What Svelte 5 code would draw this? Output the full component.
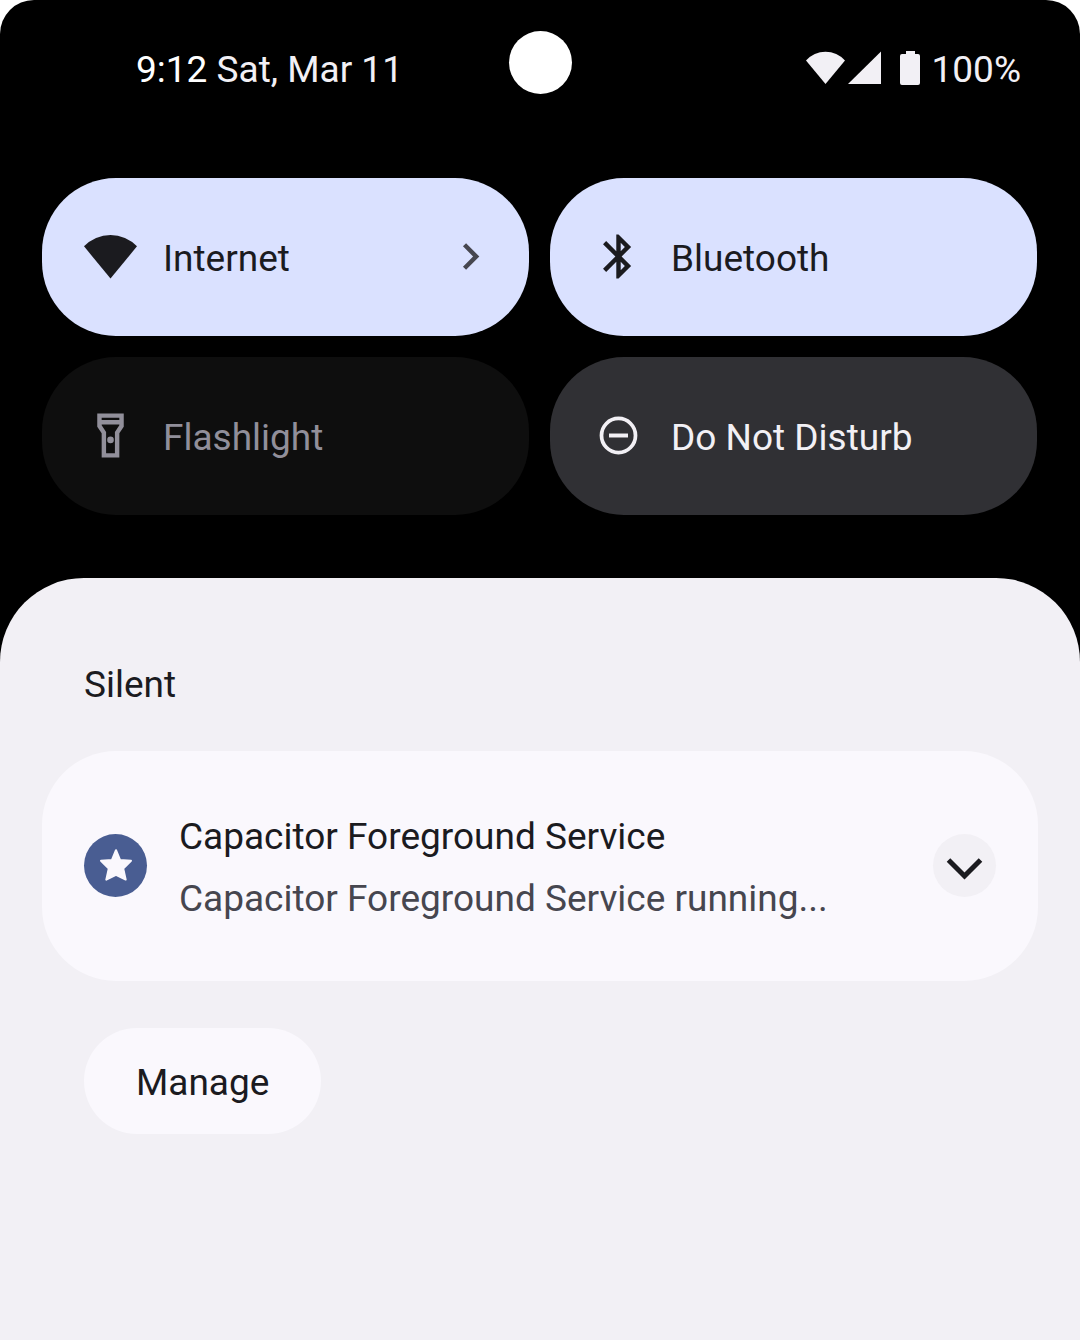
<script>
  const tiles = [
    { name: 'Internet', icon: 'wifi', look: 'on', more: true },
    { name: 'Bluetooth', icon: 'bluetooth', look: 'on' },
    { name: 'Flashlight', icon: 'flashlight', look: 'unavailable', disabled: true },
    { name: 'Do Not Disturb', icon: 'dnd', look: 'off' }
  ];
  let active = $state(tiles.map((t) => t.look));
  function toggle(i) {
    active[i] = active[i] === 'on' ? 'off' : 'on';
  }
</script>

<div class="screen">
  <header class="status">
    <div class="clock"><time>9:12</time> <span class="date">Sat, Mar 11</span></div>
    <div class="camera"></div>
    <div class="system">
      <svg class="signals" viewBox="0 0 75 34" aria-hidden="true">
        <path d="M0 9.5A26 26 0 0 1 39 9.5L19.5 33z" />
        <path d="M42 33L75 0.5V33z" />
      </svg>
      <svg class="battery" viewBox="0 0 20 34" aria-hidden="true">
        <path d="M6 0h9v3h3a2 2 0 0 1 2 2v27a2 2 0 0 1-2 2H2a2 2 0 0 1-2-2V5a2 2 0 0 1 2-2h4z" />
      </svg>
      <span>100%</span>
    </div>
  </header>

  <section class="tiles" aria-label="Quick settings">
    {#each tiles as tile, i}
      <button
        type="button"
        class="tile {active[i]}"
        disabled={tile.disabled}
        aria-pressed={active[i] === 'on'}
        onclick={() => toggle(i)}
      >
        <svg class="icon" viewBox="0 0 24 24" aria-hidden="true">
          {#if tile.icon === 'wifi'}
            <path d="M0 7.4A16.6 16.6 0 0 1 24 7.4L12 22z" />
          {:else if tile.icon === 'bluetooth'}
            <path fill-rule="evenodd" d="M17.71 7.71L12 2h-1v7.59L6.41 5 5 6.41 10.59 12 5 17.59 6.41 19 11 14.41V22h1l5.71-5.71L13.41 12l4.3-4.29zM13 5.83l1.88 1.88L13 9.59V5.83zm1.88 10.46L13 18.17v-3.76l1.88 1.88z" />
          {:else if tile.icon === 'flashlight'}
            <path fill-rule="evenodd" d="M6 2v6l2 3v11h8V11l2-3V2H6zM16 4v1H8V4h8zM14 10.4V20h-4v-9.61l-2-3V7h8v.39L14 10.4z" />
            <circle cx="12" cy="14" r="1.5" />
          {:else}
            <circle class="ring" cx="12" cy="12" r="7.7" />
            <path d="M7.7 11.1h8.6v1.8H7.7z" />
          {/if}
        </svg>
        <span class="label">{tile.name}</span>
        {#if tile.more}
          <svg class="icon more" viewBox="0 0 24 24" aria-hidden="true">
            <path d="M10 6L8.59 7.41 13.17 12l-4.58 4.59L10 18l6-6z" />
          </svg>
        {/if}
      </button>
    {/each}
  </section>

  <main class="shade">
    <h2>Silent</h2>
    <article class="card">
      <div class="badge">
        <svg viewBox="0 0 34 34" aria-hidden="true">
          <path d="M17 2.2L21 12 32 12.7 24.2 20.5 26.7 31.6 17 26.8 7.3 31.6 9.8 20.5 2 12.7 13 12z" />
        </svg>
      </div>
      <div class="text">
        <h3>Capacitor Foreground Service</h3>
        <p>Capacitor Foreground Service running...</p>
      </div>
      <button type="button" class="expand" aria-label="Expand">
        <svg viewBox="0 0 63 63" aria-hidden="true">
          <path d="M15.5 26L31.5 42L47.5 26" />
        </svg>
      </button>
    </article>
    <button type="button" class="manage">Manage</button>
  </main>
</div>

<style>
  :global(body) {
    margin: 0;
    background: #fff;
  }
  .screen {
    display: flex;
    flex-direction: column;
    min-height: 100vh;
    background: #000;
    border-radius: 34px 34px 0 0;
    font-family: Roboto, sans-serif;
    font-size: 37px;
    line-height: 44px;
    overflow: hidden;
  }
  button {
    font: inherit;
    border: 0;
    margin: 0;
    cursor: pointer;
  }
  svg {
    display: block;
    flex: none;
    fill: currentColor;
  }
  .status {
    display: grid;
    grid-template-columns: 1fr auto 1fr;
    align-items: center;
    padding: 31px 59px 84px;
    color: #f2f0f5;
  }
  .clock {
    padding: 14px 0 0 77px;
  }
  time {
    color: #fff;
  }
  .camera {
    width: 63px;
    height: 63px;
    border-radius: 50%;
    background: #fff;
  }
  .system {
    display: flex;
    justify-content: flex-end;
    align-items: center;
    padding-top: 14px;
  }
  .signals {
    width: 75px;
    height: 34px;
    margin: 0 19px 3px 0;
  }
  .battery {
    width: 20px;
    height: 34px;
    margin: 0 12px 3px 0;
  }
  .tiles {
    display: grid;
    grid-template-columns: 1fr 1fr;
    gap: 21px;
    padding: 0 43px 63px 42px;
  }
  .tile {
    display: flex;
    align-items: center;
    gap: 26px;
    min-height: 158px;
    box-sizing: border-box;
    padding: 0 32px 1px 42px;
    border-radius: 74px;
    text-align: left;
  }
  .tile.on {
    background: #dae1ff;
    color: #1b1b1f;
  }
  .tile.off {
    background: #303034;
    color: #f2f0f5;
  }
  .tile.unavailable {
    background: #0e0e0e;
    color: #918f9a;
  }
  .icon {
    width: 53px;
    height: 53px;
  }
  .ring {
    fill: none;
    stroke: currentColor;
    stroke-width: 1.7;
  }
  .label {
    flex: 1;
    padding-top: 4px;
  }
  .more {
    color: #46464f;
  }
  .shade {
    flex: 1;
    padding: 85px 42px;
    background: #f2f0f5;
    border-radius: 84px 84px 0 0;
    color: #1b1b1f;
  }
  h2,
  h3,
  p {
    margin: 0;
    font-size: inherit;
    font-weight: 400;
  }
  h2 {
    padding: 0 42px 44px;
  }
  .card {
    display: flex;
    align-items: center;
    box-sizing: border-box;
    min-height: 230px;
    padding: 0 42px 2px;
    border-radius: 74px;
    background: #faf8fd;
  }
  .badge {
    display: grid;
    place-items: center;
    width: 63px;
    height: 63px;
    border-radius: 50%;
    background: #495d92;
    color: #faf8fd;
  }
  .badge svg {
    width: 34px;
    height: 34px;
    stroke: currentColor;
    stroke-width: 2;
    stroke-linejoin: round;
  }
  .text {
    flex: 1;
    display: grid;
    gap: 18px;
    padding: 5px 0 0 32px;
  }
  p {
    color: #46464f;
  }
  .expand {
    padding: 0;
    width: 63px;
    height: 63px;
    border-radius: 50%;
    background: #f2f0f5;
    color: #1b1b1f;
  }
  .expand path {
    fill: none;
    stroke: currentColor;
    stroke-width: 5;
  }
  .manage {
    display: block;
    min-height: 106px;
    margin: 47px 42px 0;
    padding: 4px 52px 0;
    border-radius: 53px;
    background: #faf8fd;
    color: #1b1b1f;
  }
</style>
